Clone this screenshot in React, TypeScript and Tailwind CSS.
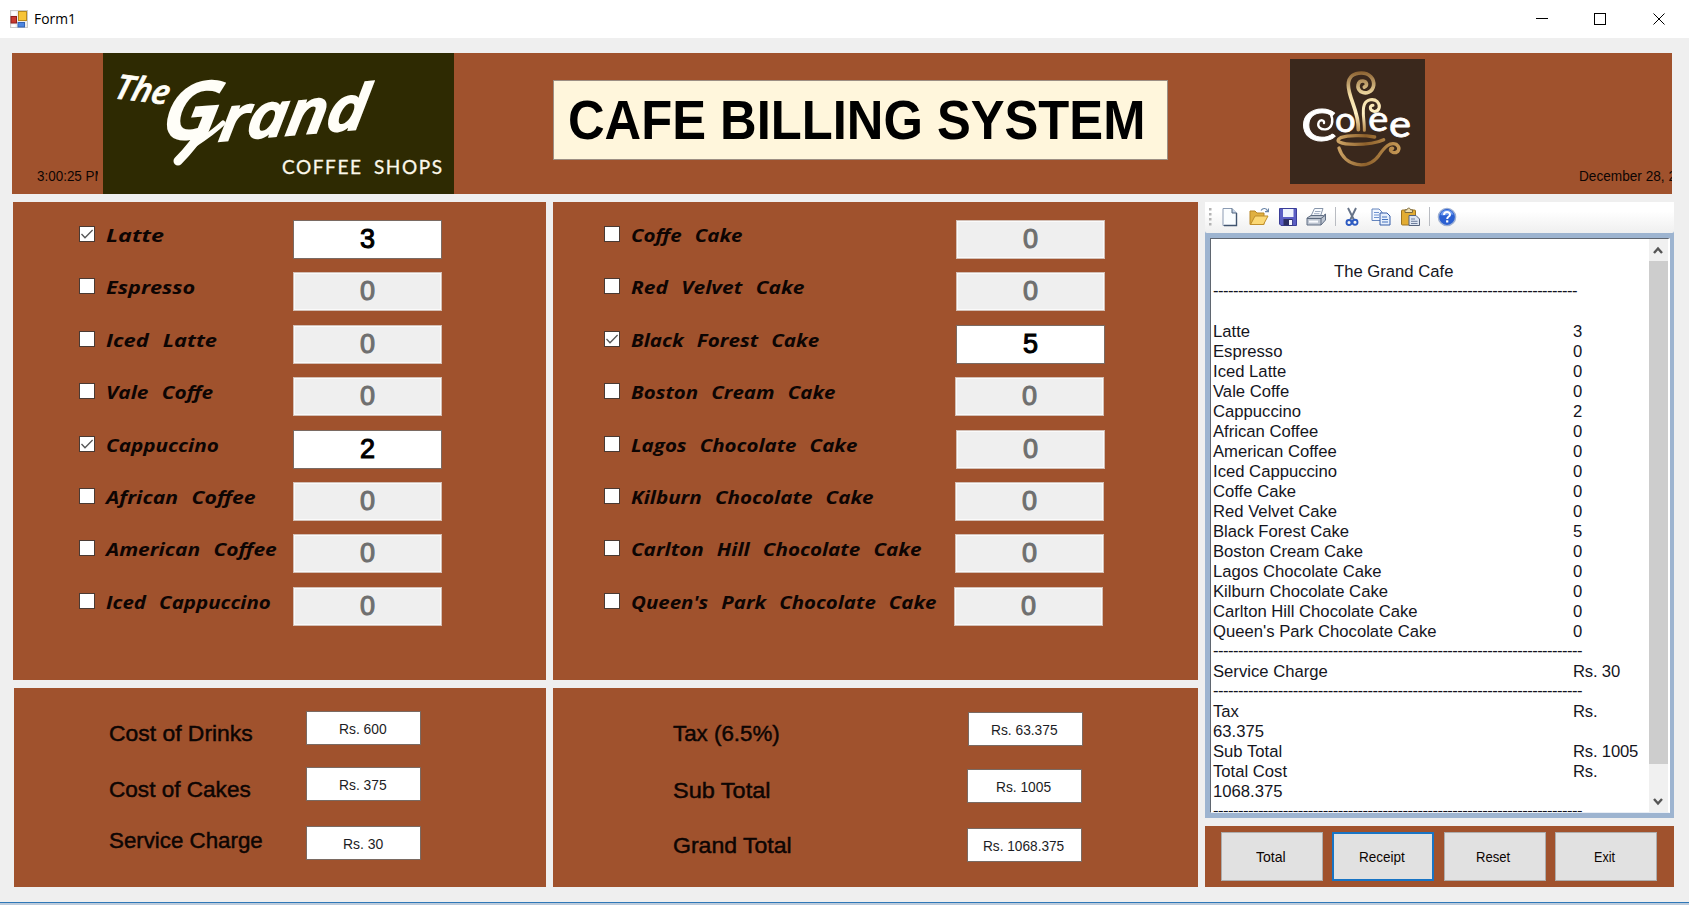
import { useLayoutEffect, useRef, useState } from "react";
import type { ReactNode } from "react";

type FitProps = { w: number; className?: string; children: ReactNode };

/** Single line of text, condensed or expanded horizontally to a given width. */
function Fit({ w, className = "", children }: FitProps) {
  const ref = useRef<HTMLSpanElement>(null);
  const [scale, setScale] = useState(1);
  useLayoutEffect(() => {
    if (ref.current) setScale(w / ref.current.offsetWidth);
  }, [w]);
  return (
    <span className={`block whitespace-nowrap ${className}`} style={{ width: w }}>
      <span ref={ref} className="inline-block origin-left" style={{ transform: `scaleX(${scale})` }}>
        {children}
      </span>
    </span>
  );
}

type Item = { name: string; w: number; qty: number; inset?: string };

const drinks: Item[] = [
  { name: "Latte", w: 58, qty: 3 },
  { name: "Espresso", w: 89, qty: 0 },
  { name: "Iced Latte", w: 111, qty: 0 },
  { name: "Vale Coffe", w: 107, qty: 0 },
  { name: "Cappuccino", w: 113, qty: 2 },
  { name: "African Coffee", w: 150, qty: 0 },
  { name: "American Coffee", w: 171, qty: 0 },
  { name: "Iced Cappuccino", w: 165, qty: 0 },
];

const cakes: Item[] = [
  { name: "Coffe Cake", w: 112, qty: 0, inset: "mr-[93px]" },
  { name: "Red Velvet Cake", w: 173, qty: 0, inset: "mr-[93px]" },
  { name: "Black Forest Cake", w: 188, qty: 5, inset: "mr-[93px]" },
  { name: "Boston Cream Cake", w: 205, qty: 0, inset: "mr-[94px]" },
  { name: "Lagos Chocolate Cake", w: 226, qty: 0, inset: "mr-[93px]" },
  { name: "Kilburn Chocolate Cake", w: 243, qty: 0, inset: "mr-[94px]" },
  { name: "Carlton Hill Chocolate Cake", w: 291, qty: 0, inset: "mr-[94px]" },
  { name: "Queen's Park Chocolate Cake", w: 306, qty: 0, inset: "mr-[95px]" },
];

function ItemRow({ item, inset }: { item: Item; inset: string }) {
  const on = item.qty > 0;
  return (
    <div className="flex h-[52.4px] items-start">
      <span className="mt-[6px] h-4 w-4 shrink-0 border border-[#4a3a33] bg-white">
        {on && (
          <svg viewBox="0 0 14 14" className="h-[14px] w-[14px]">
            <path d="M1.5 7 L5 10.8 L12.6 3" fill="none" stroke="#555" strokeWidth="1.3" />
          </svg>
        )}
      </span>
      <Fit
        w={item.w}
        className="mt-[3px] ml-[11px] font-['Open_Sans',sans-serif] text-[18.5px] leading-6 font-bold italic [word-spacing:7px]"
      >
        {item.name}
      </Fit>
      <div
        className={`ml-auto flex h-[39px] w-[149px] shrink-0 items-center justify-center border text-[27px] leading-none ${inset} ${
          on
            ? "border-[#7a6a62] bg-white text-black [-webkit-text-stroke:1.1px_#000]"
            : "border-[#d3bfb5] bg-[#efefef] text-[#6f6f6f] shadow-[inset_0_0_0_1px_#fafafa] [-webkit-text-stroke:1.1px_#6f6f6f]"
        }`}
      >
        {item.qty}
      </div>
    </div>
  );
}

function Amount({ w, className = "", children }: { w: number; className?: string; children: ReactNode }) {
  return (
    <div className={`flex h-[34px] w-[115px] shrink-0 justify-center border border-[#7a6a62] bg-white pr-[2px] text-[15px] text-[#1c1c24] ${className}`}>
      <Fit w={w} className="leading-[34px]">{children}</Fit>
    </div>
  );
}

const labelCls = "text-[21.3px] leading-6 [-webkit-text-stroke:0.45px_#0d0503] text-[#0d0503]";

function GrandLogo() {
  return (
    <svg viewBox="0 0 351 141" className="h-[141px] w-[351px] shrink-0 bg-[#2e2a02]">
      <g fill="#fffef8" stroke="#fffef8" fontFamily="Open Sans, sans-serif" fontStyle="italic" fontWeight="600">
        <text fontSize="34" strokeWidth="0.8" transform="translate(10 45) rotate(7) skewX(-8)" textLength="54" lengthAdjust="spacingAndGlyphs">
          The
        </text>
        <text fontSize="76" strokeWidth="3" transform="translate(57 87) rotate(-4) skewX(-14)" textLength="56" lengthAdjust="spacingAndGlyphs">
          G
        </text>
        <text fontSize="60" strokeWidth="2.4" transform="translate(115 88) rotate(-5) skewX(-14)" textLength="147" lengthAdjust="spacingAndGlyphs">
          rand
        </text>
        <path d="M109 57 C104 74 88 94 75 108 M120 70 C110 80 97 88 85 96" fill="none" strokeWidth="5" strokeLinecap="round" />
        <path d="M100 76 C92 90 84 99 75 108" fill="none" strokeWidth="9" strokeLinecap="round" />
      </g>
      <text x="179" y="121" fontSize="19" fill="#fbf8ea" stroke="#fbf8ea" strokeWidth="0.3" fontFamily="Lato, sans-serif" textLength="160" wordSpacing="5">
        COFFEE SHOPS
      </text>
    </svg>
  );
}

function CoffeeLogo() {
  return (
    <svg viewBox="61 28 405 375" className="h-[125px] w-[135px] shrink-0 bg-[#3a281c]">
      <defs>
        <linearGradient id="steam" x1="0" y1="65" x2="0" y2="245" gradientUnits="userSpaceOnUse">
          <stop offset="0" stopColor="#8a6030" />
          <stop offset="0.4" stopColor="#f3dda4" />
          <stop offset="0.7" stopColor="#fff0c4" />
          <stop offset="1" stopColor="#b98d4e" />
        </linearGradient>
        <linearGradient id="cup" x1="200" y1="0" x2="395" y2="0" gradientUnits="userSpaceOnUse">
          <stop offset="0" stopColor="#d0a768" />
          <stop offset="0.45" stopColor="#8d602b" />
          <stop offset="1" stopColor="#c99c58" />
        </linearGradient>
      </defs>
      <g fill="none" strokeLinecap="round">
        <path d="M266 240 C268 185 236 145 236 106 C236 80 254 70 275 70 C300 70 314 87 312 107 C309 128 288 134 274 126 C259 115 264 93 280 94 C292 95 294 108 284 112" stroke="url(#steam)" strokeWidth="11" />
        <path d="M284 242 C285 215 276 185 284 165 C291 148 312 146 323 156 C335 169 328 187 312 185 C299 182 299 167 310 167" stroke="url(#steam)" strokeWidth="9" />
        <path d="M315 262 C280 256 235 257 213 264 C193 274 213 284 255 284 C295 284 325 278 342 270" stroke="url(#cup)" strokeWidth="10" />
        <path d="M208 295 C225 352 295 362 327 318 C345 292 360 276 380 284 C396 296 384 312 370 308 C359 304 361 294 369 296" stroke="url(#cup)" strokeWidth="10" />
        <path d="M184 196 C192 212 188 236 168 239 C152 241 142 230 147 218 C152 208 165 211 163 220" stroke="#fff" strokeWidth="7" />
      </g>
      <g fill="#fff" stroke="#fff" strokeWidth="2.5" fontFamily="Lato, sans-serif">
        <text y="274" x="94" fontSize="134" textLength="106" lengthAdjust="spacingAndGlyphs">C</text>
        <text y="247" x="196" fontSize="106" textLength="62" lengthAdjust="spacingAndGlyphs">o</text>
        <text y="244" x="296" fontSize="104" textLength="60" lengthAdjust="spacingAndGlyphs">e</text>
        <text y="262" x="358" fontSize="110" textLength="66" lengthAdjust="spacingAndGlyphs">e</text>
      </g>
    </svg>
  );
}

function Icon({ className = "", children }: { className?: string; children: ReactNode }) {
  return (
    <svg viewBox="0 0 20 20" className={`h-5 w-5 shrink-0 ${className}`}>
      {children}
    </svg>
  );
}

function Toolbar() {
  return (
    <div className="flex h-[31px] items-center rounded-b-[2px] bg-linear-to-b from-white from-30% to-[#efefef] pb-[2px] pl-[4px]">
      <svg viewBox="0 0 3 20" className="h-5 w-[3px] shrink-0" fill="#b4b4b4">
        <rect y="1" width="2.5" height="2.5" /><rect y="6" width="2.5" height="2.5" />
        <rect y="11" width="2.5" height="2.5" /><rect y="16" width="2.5" height="2.5" />
      </svg>
      <Icon className="ml-[9px]">
        <path d="M2 1.5 H11 L15.5 6 V18.5 H2 Z" fill="#fafdff" stroke="#8b9bb3" />
        <path d="M15.5 6 V18.5 H3" fill="none" stroke="#41546f" strokeWidth="1.4" />
        <path d="M11 1.5 V6 H15.5" fill="#c4d2e6" stroke="#51647f" />
      </Icon>
      <Icon className="ml-[8px]">
        <path d="M1 17.5 V4 H6 L8 6 H15 V17.5 Z" fill="#e0b040" stroke="#b98725" />
        <path d="M1.5 17.5 L6 9 H19 L14.5 17.5 Z" fill="#fbd875" stroke="#c08f2c" />
        <path d="M12 3.5 C14 .5 17.5 1 18.5 4 M19.5 1.5 V4.6 H16" fill="none" stroke="#6b86a8" strokeWidth="1.2" />
      </Icon>
      <Icon className="ml-[9px]">
        <path d="M1.5 1.5 H18.5 V18.5 H3 L1.5 17 Z" fill="#5b5ec4" stroke="#3b3e99" />
        <rect x="5" y="2" width="10.5" height="8" fill="#eef2fc" />
        <rect x="5.5" y="12" width="9" height="6.5" fill="#2d2f63" />
        <rect x="11" y="13" width="3" height="5" fill="#f4f6ff" />
      </Icon>
      <Icon className="ml-[8px]">
        <path d="M5 9 L8.5 1.5 H17 L14.5 9" fill="#f8fbff" stroke="#8896ab" />
        <path d="M9 4.5 H14.5 M8 6.7 H13.5" stroke="#9eabc0" />
        <path d="M1 11 L5 8.5 H17.5 L19.5 7 V13 L15 18 H1 Z" fill="#bdc5d1" stroke="#606e84" />
        <path d="M1 11.5 H15 L19 8.5 M15 11.5 V18" fill="none" stroke="#5c697e" />
        <path d="M3 14.6 H12" stroke="#f9fbff" strokeWidth="2" />
      </Icon>
      <span className="mr-[6px] ml-[9px] h-[19px] w-px bg-[#b9bcc2]" />
      <Icon>
        <path d="M6 1 L11.8 12.5 M14 1 L8.4 12.5" stroke="#667388" strokeWidth="1.9" />
        <circle cx="7" cy="15.5" r="2.5" fill="none" stroke="#2d5bc2" strokeWidth="1.9" />
        <circle cx="13" cy="15.2" r="2.5" fill="none" stroke="#2d5bc2" strokeWidth="1.9" />
      </Icon>
      <Icon className="ml-[9px]">
        <path d="M1 2 H8 L11 5 V13.5 H1 Z" fill="#f2f7ff" stroke="#6585bd" />
        <path d="M3 5.5 H8 M3 8 H8 M3 10.5 H8" stroke="#6f93d0" />
        <path d="M9 6 H16 L19 9 V18 H9 Z" fill="#e6effc" stroke="#355da8" />
        <path d="M11 10 H16 M11 12.5 H17 M11 15 H17" stroke="#4672bd" />
      </Icon>
      <Icon className="ml-[9px]">
        <rect x="1.5" y="3" width="14" height="15" rx="1" fill="#e2ac33" stroke="#9d7422" />
        <path d="M5 5.5 V2.8 H7 C7 .6 10.5 .6 10.5 2.8 H12.5 V5.5 Z" fill="#f0dfae" stroke="#7c6a3c" />
        <path d="M9 8.5 H16 L19.5 12 V18.5 H9 Z" fill="#dde5f2" stroke="#56637c" />
        <path d="M11 12 H15 M11 14.3 H17.5 M11 16.5 H17.5" stroke="#6f7f9e" />
      </Icon>
      <span className="mr-[7px] ml-[9px] h-[19px] w-px bg-[#b9bcc2]" />
      <Icon>
        <circle cx="10" cy="10" r="8.6" fill="#2b60d2" stroke="#9fb1d3" strokeWidth="1.4" />
        <path d="M3.5 8 A6.7 6.7 0 0 1 16.5 8 C12 6.5 8 9.5 3.5 8 Z" fill="#6f9cf0" />
        <path d="M7 8 C7 4 13.2 4.2 13 7.8 C12.8 9.6 10.2 9.6 10.2 12" fill="none" stroke="#fff" strokeWidth="2" />
        <rect x="9.1" y="13.3" width="2.2" height="2.2" fill="#fff" />
      </Icon>
    </div>
  );
}

type Line = { l?: string; r?: string; dash?: number };

const receipt: Line[] = [
  ...[...drinks, ...cakes].map((i) => ({ l: i.name, r: String(i.qty) })),
  { dash: 74 },
  { l: "Service Charge", r: "Rs. 30" },
  { dash: 74 },
  { l: "Tax", r: "Rs." },
  { l: "63.375" },
  { l: "Sub Total", r: "Rs. 1005" },
  { l: "Total Cost", r: "Rs." },
  { l: "1068.375" },
  { dash: 74 },
];

function ReceiptLine({ l, r, dash }: Line) {
  if (dash) return <div className="-mt-px mb-px h-5 tracking-[-0.56px] whitespace-nowrap">{"-".repeat(dash)}</div>;
  return (
    <div className="flex h-5 whitespace-nowrap">
      <span className="w-[360px]">{l}</span>
      <span className="tracking-[-0.2px]">{r}</span>
    </div>
  );
}

const buttons = [
  { name: "Total", w: 30 },
  { name: "Receipt", w: 46, focus: true },
  { name: "Reset", w: 34 },
  { name: "Exit", w: 21 },
];

export default function App() {
  return (
    <div className="flex h-[905px] w-[1689px] flex-col overflow-hidden bg-[#efefef] font-['Liberation_Sans',Arial,sans-serif] text-[#0d0503]">
      <div className="flex h-[38px] shrink-0 items-center bg-white pl-[10px]">
        <svg viewBox="0 0 18 18" className="h-[18px] w-[18px]">
          <rect x=".5" y=".5" width="17" height="17" fill="#ececec" stroke="#c9c9c9" />
          <rect x="1.5" y="1.5" width="5" height="4" fill="#fff" />
          <rect x="8.5" y="1.5" width="8" height="9" fill="#f7c437" stroke="#b98a1c" />
          <rect x="1" y="6.5" width="5.5" height="6.5" fill="#c93a30" stroke="#8e1f1c" />
          <rect x="8" y="12.5" width="6.5" height="4.5" fill="#4d86e0" stroke="#3263b4" />
          <rect x="1.5" y="14.5" width="4" height="2.5" fill="#fff" />
        </svg>
        <Fit w={42} className="ml-[6px] font-['Open_Sans',sans-serif] text-[14.5px] leading-[38px] text-black">Form1</Fit>
        <svg viewBox="0 0 130 14" className="mr-[23px] ml-auto h-[14px] w-[130px]" fill="none" stroke="#000">
          <path d="M0 6.5 H12" />
          <rect x="58.5" y="1.5" width="11" height="11" />
          <path d="M117.5 1.5 L128.5 12.5 M128.5 1.5 L117.5 12.5" />
        </svg>
      </div>

      <div className="mt-[15px] ml-[12px] flex h-[141px] w-[1660px] shrink-0 overflow-hidden bg-[#a0522d]">
        <div className="mr-[5px] ml-[24px] w-[62px] shrink-0 overflow-hidden pt-[113px] pl-px">
          <Fit w={69} className="text-[15px] leading-5">3:00:25 PM</Fit>
        </div>
        <GrandLogo />
        <div className="mt-[27px] ml-[99px] flex h-[80px] w-[615px] shrink-0 border border-[#9d8f84] bg-[#fff6dc] pl-[14px] text-[55px] font-bold text-black">
          <Fit w={577} className="leading-[78px]">CAFE BILLING SYSTEM</Fit>
        </div>
        <div className="mt-[6px] ml-[122px]">
          <CoffeeLogo />
        </div>
        <div className="ml-[153px] w-[94px] shrink-0 overflow-hidden pt-[113px] pl-px">
          <Fit w={120} className="text-[15px] leading-5">December 28, 2019</Fit>
        </div>
      </div>

      <div className="mt-[8px] flex h-[685px] shrink-0 gap-[7px] pl-[13px]">
        <div className="flex w-[533px] flex-col gap-[8px]">
          <section className="h-[478px] bg-[#a0522d] pt-[18px] pl-[66px]">
            {drinks.map((d) => <ItemRow key={d.name} item={d} inset="mr-[104px]" />)}
          </section>
          <section className="ml-px flex h-[199px] bg-[#a0522d] pl-[95px]">
            <div className={`w-[197px] ${labelCls}`}>
              <Fit w={144} className="mt-[34px]">Cost of Drinks</Fit>
              <Fit w={142} className="mt-[32px]">Cost of Cakes</Fit>
              <Fit w={154} className="mt-[27px]">Service Charge</Fit>
            </div>
            <div className="pt-[23px]">
              <Amount w={48}>Rs. 600</Amount>
              <Amount w={48} className="mt-[22px]">Rs. 375</Amount>
              <Amount w={40} className="mt-[25px]">Rs. 30</Amount>
            </div>
          </section>
        </div>

        <div className="flex w-[645px] flex-col gap-[8px]">
          <section className="h-[478px] bg-[#a0522d] pt-[18px] pl-[51px]">
            {cakes.map((c) => <ItemRow key={c.name} item={c} inset={c.inset ?? ""} />)}
          </section>
          <section className="flex h-[199px] bg-[#a0522d] pl-[120px]">
            <div className={`w-[294px] ${labelCls}`}>
              <Fit w={107} className="mt-[34px]">Tax (6.5%)</Fit>
              <Fit w={97} className="mt-[33px]">Sub Total</Fit>
              <Fit w={119} className="mt-[31px]">Grand Total</Fit>
            </div>
            <div className="pt-[24px]">
              <Amount w={67} className="ml-px">Rs. 63.375</Amount>
              <Amount w={55} className="mt-[23px]">Rs. 1005</Amount>
              <Amount w={81} className="mt-[25px]">Rs. 1068.375</Amount>
            </div>
          </section>
        </div>

        <div className="flex w-[469px] flex-col gap-[8px]">
          <div className="flex h-[616px] flex-col bg-[#9db4d0]">
            <Toolbar />
            <div className="mt-[5px] mr-[4px] ml-[5px] flex h-[575px] overflow-hidden border-t border-r-2 border-b border-l border-t-[#5f6670] border-r-white border-b-[#e9eef5] border-l-[#5f6670] bg-white">
              <div className="grow pt-[3px] pl-[2px] text-[16.67px] leading-5 text-[#15151d]">
                <div className="h-5" />
                <div className="h-5 pl-[121px]">The Grand Cafe</div>
                <ReceiptLine dash={73} />
                <div className="h-5" />
                {receipt.map((r, i) => <ReceiptLine key={i} {...r} />)}
              </div>
              <div className="-mr-px flex w-[20px] shrink-0 flex-col bg-[#f0f0f0]">
                <svg viewBox="0 0 19 22" className="h-[22px] w-[19px]">
                  <path d="M5 14 L9 9.5 L13 14" fill="none" stroke="#555" strokeWidth="2.4" />
                </svg>
                <div className="h-[503px] w-[19px] bg-[#cdcdcd]" />
                <svg viewBox="0 0 19 22" className="mt-auto h-[22px] w-[19px]">
                  <path d="M5 9 L9 13.5 L13 9" fill="none" stroke="#555" strokeWidth="2.4" />
                </svg>
              </div>
            </div>
          </div>
          <div className="flex h-[61px] gap-[9.3px] bg-[#a0522d] pt-[6px] pl-[16px]">
            {buttons.map((b) => (
              <button
                key={b.name}
                className={`flex h-[49px] w-[102px] shrink-0 justify-center bg-[#e1e1e1] pr-[3px] text-[15px] ${
                  b.focus ? "border-2 border-[#1874c4]" : "border border-[#adadad]"
                }`}
              >
                <Fit w={b.w} className={b.focus ? "leading-[45px]" : "leading-[47px]"}>{b.name}</Fit>
              </button>
            ))}
          </div>
        </div>
      </div>

      <div className="mt-auto h-[3px] shrink-0 border-t border-[#2f78b8] bg-[#bccbdc]" />
    </div>
  );
}
